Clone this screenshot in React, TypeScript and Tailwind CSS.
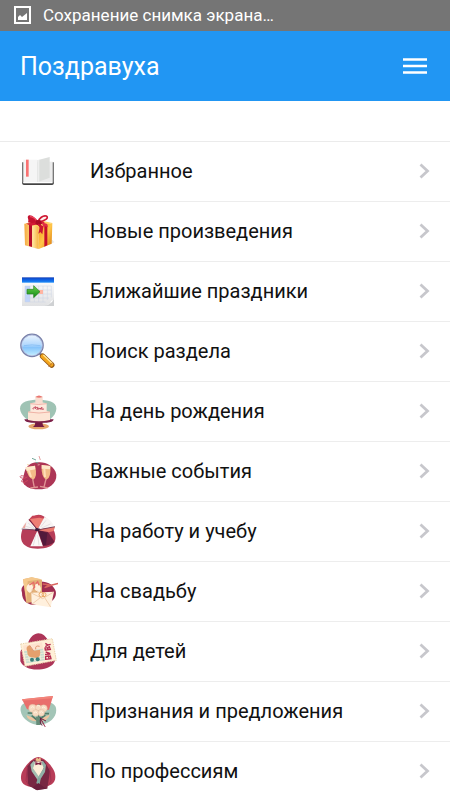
import React from 'react';

const Icon: React.FC<{ children: React.ReactNode }> = ({ children }) => (
    <svg className="w-10 h-10 shrink-0" viewBox="24 21 120 120" aria-hidden="true">
        {children}
    </svg>
);

const BookIcon = () => (
    <Icon>
        <path d="M36 52h96v62q0 6-6 6H42q-6 0-6-6z" fill="#777" />
        <path d="M38 112h92v3q0 4-4 4H42q-4 0-4-4z" fill="#333" />
        <path d="M40 44h42v70H40z" fill="#f5f5f5" />
        <path d="M82 50h46v61H82z" fill="#ececec" />
        <path d="M82 46l37-10v62l-37 14z" fill="#dcdedc" />
        <path d="M82 46l6-2v66l-6 2z" fill="#eee" />
        <path d="M40 111h88v4H40z" fill="#fff" />
        <path d="M48 44h8v51h-8z" fill="#f97272" />
    </Icon>
);

const GiftIcon = () => (
    <Icon>
        <defs>
            <linearGradient id="giftLeft" x1="0" x2="1">
                <stop offset="0" stopColor="#f5a83c" />
                <stop offset=".6" stopColor="#ffe49b" />
                <stop offset="1" stopColor="#f6b23f" />
            </linearGradient>
            <linearGradient id="giftRight" x1="0" x2="1" y1="0" y2="1">
                <stop offset="0" stopColor="#f19a1d" />
                <stop offset=".5" stopColor="#ffc649" />
                <stop offset="1" stopColor="#d87407" />
            </linearGradient>
        </defs>
        <path d="M45 120l38 12 50-20-5-7z" fill="#ddd" opacity=".7" />
        <path d="M43 56l43 8v68l-41-11z" fill="url(#giftLeft)" />
        <path d="M86 64l41-10-2 62-39 16z" fill="url(#giftRight)" />
        <path d="M43 56l43-11 41 9-41 11z" fill="#ffcf62" />
        <path d="M57 58l9 2v66l-9-3z" fill="#b80f2a" />
        <path d="M103 60l9-3v64l-9 4z" fill="#c50f2c" />
        <path d="M48 56l45-9 12 6-42 9z" fill="#d31a36" />
        <path d="M84 50c-8-12-20-23-29-18-5 5 3 10-1 20 8 4 20 2 30-2z" fill="#c4122f" />
        <path d="M60 35c8 0 16 6 21 13" stroke="#ef4a60" strokeWidth="4" fill="none" />
        <path d="M85 50c2-10 14-20 24-17 9 5-4 16-24 17z" fill="#fff2ee" stroke="#cf1733" strokeWidth="5" />
        <path d="M79 45l12 1 6 9-9 8-12-6z" fill="#a80b25" />
        <path d="M86 56l14 8-3 24-6-7-6 5 4-18-6-10z" fill="#cc1631" />
        <path d="M94 52l16 4 4 10-8-2-3 6z" fill="#e02d46" />
    </Icon>
);

const CalendarIcon = () => (
    <Icon>
        <defs>
            <linearGradient id="calTop" x1="0" x2="0" y1="0" y2="1">
                <stop offset="0" stopColor="#1442b8" />
                <stop offset=".35" stopColor="#0d58dd" />
                <stop offset="1" stopColor="#1c8cf8" />
            </linearGradient>
            <linearGradient id="calPage" x1="0" x2="0" y1="0" y2="1">
                <stop offset="0" stopColor="#fff" />
                <stop offset="1" stopColor="#e0e1e3" />
            </linearGradient>
            <linearGradient id="calArrow" x1="0" x2="0" y1="0" y2="1">
                <stop offset="0" stopColor="#6cd34b" />
                <stop offset="1" stopColor="#118a14" />
            </linearGradient>
        </defs>
        <path d="M36 38h96v85H36z" fill="url(#calPage)" />
        <path d="M45 63h15v48H45z" fill="#bfd4fb" />
        <path d="M45 63h79M45 75h79M45 87h79M45 99h72M45 111h62M45 63v48M60 63v48M73 63v48M86 63v48M99 63v48M112 63v42M124 63v34" stroke="#cbd3e2" strokeWidth="1.5" fill="none" />
        <path d="M87 75h12v12H87z" fill="#ffb5a2" />
        <path d="M36 37h96v16H36z" fill="url(#calTop)" />
        <path d="M132 100v23h-30q20-2 18-13 9 0 12-10z" fill="#cfd1d3" />
        <path d="M104 119q20-2 18-11 6 0 9-7-3 17-27 18z" fill="#fff" />
        <path d="M51 73h20V62l19 18-19 18V87H51z" fill="url(#calArrow)" stroke="#287f21" strokeWidth="2" />
    </Icon>
);

const SearchIcon = () => (
    <Icon>
        <defs>
            <linearGradient id="lens" x1="0" x2="0" y1="0" y2="1">
                <stop offset="0" stopColor="#eef6ff" />
                <stop offset=".48" stopColor="#b2d8fd" />
                <stop offset=".6" stopColor="#86c4fb" />
                <stop offset="1" stopColor="#c7f1ff" />
            </linearGradient>
        </defs>
        <path d="M89 85l10 9" stroke="#777c95" strokeWidth="7" />
        <path d="M98 94l27 26" stroke="#955a18" strokeWidth="17" strokeLinecap="round" />
        <path d="M98 94l26 25" stroke="#f4a51c" strokeWidth="12" strokeLinecap="round" />
        <path d="M101 91l25 24" stroke="#ffe695" strokeWidth="4" strokeLinecap="round" />
        <path d="M116 125l12-12" stroke="#b56a28" strokeWidth="3" />
        <circle cx="66" cy="61" r="33" fill="url(#lens)" stroke="#7880a9" strokeWidth="5" />
        <circle cx="66" cy="61" r="31" fill="none" stroke="#cad7f2" strokeWidth="2" />
        <path d="M42 62q24-5 49 0" stroke="#7db8f2" strokeWidth="2" fill="none" />
    </Icon>
);

const CakeIcon = () => (
    <Icon>
        <path d="M30 71c0-22 26-27 54-27s56 5 55 27c-1 22-26 44-54 44S31 91 30 71z" fill="#9fc3b4" />
        <ellipse cx="86" cy="124" rx="31" ry="9" fill="#e5a66e" />
        <path d="M76 110h22q-2 10 6 16H69q8-6 7-16z" fill="#761b43" />
        <path d="M43 103h88q-2 10-21 10H64q-19 0-21-10z" fill="#7d2148" />
        <path d="M54 80q33-8 66 0v25q-33 8-66 0z" fill="#fde5d5" />
        <path d="M61 55q25-6 49 0v24q-25 6-49 0z" fill="#fde8dc" />
        <path d="M76 35q11-4 22 0v19q-11 4-22 0z" fill="#f8ddd0" />
        <path d="M76 36q11-9 22 0-11 5-22 0z" fill="#e97671" />
        <path d="M54 81q33 6 66 0M61 56q24 5 49 0" stroke="#e9998e" strokeWidth="2" fill="none" />
        <path d="M70 73q-4-3 2-5 9-7 3 3 5-5 8-4l-2 7q7-9 5-1 6-8 5 0 7-13 4 0l7-1" stroke="#b92f48" strokeWidth="2.5" fill="none" />
    </Icon>
);

const ChampagneIcon = () => (
    <Icon>
        <path d="M43 83c5-23 25-34 43-31 19-2 50 12 53 37 2 27-23 44-54 44-26 0-46-10-47-28z" fill="#ad3656" />
        <path d="M46 94q-20-5-14 4 12 7 20-2-18 5-17 14 8 6 19-4-18 7-9 14" stroke="#c8435c" strokeWidth="2.5" fill="none" />
        <path d="M47 67l28-5q8 32-5 42-16-3-23-37z" fill="#f3bd88" />
        <path d="M47 67l28-5 1 11-26 5z" fill="#ffe9cd" />
        <path d="M95 60l26 3q3 36-12 41-16-7-14-44z" fill="#f3bd88" />
        <path d="M95 60l26 3-1 10-25-2z" fill="#ffe8ca" />
        <path d="M56 74l7 22M103 71l2 25" stroke="#ffdfb8" strokeWidth="6" />
        <path d="M68 102l5 26M108 102l-6 24M61 129l23-3M90 124l23 5" stroke="#e09494" strokeWidth="4" />
        <path d="M66 40l12 5M77 52l8 2" stroke="#75a99b" strokeWidth="3" />
        <path d="M87 33l4 12M83 60l6-1" stroke="#e5a1a1" strokeWidth="3" />
        <circle cx="54" cy="59" r="2" fill="#efc286" />
    </Icon>
);

const UmbrellaIcon = () => (
    <Icon>
        <path d="M38 72c8-17 29-43 47-43 21 0 35 20 45 43 14 31 8 59-47 59-49 0-57-29-45-59z" fill="#b63d58" />
        <path d="M35 73q6-20 20-29l28 30z" fill="#f7f4f4" />
        <path d="M37 68l12-16-4 18z" fill="#eca79f" />
        <path d="M82 74L56 44l11-12 24-1 12 8z" fill="#c64355" />
        <path d="M82 72L60 42l28-4 14 3z" fill="#ee7f75" />
        <path d="M82 74l22-39q22 10 29 31z" fill="#f8f5f4" />
        <path d="M82 74l53-9-4 13-35 9z" fill="#ec7b6f" />
        <path d="M82 77l17 47H61z" fill="#fbf8f7" />
        <path d="M84 76l15 47q18 0 35-12l-20-30z" fill="#6f2141" />
        <path d="M84 76l16 45 8-2 4-35z" fill="#531a3b" />
        <path d="M82 74L57 43M82 75l-47-3M82 75l53-10" stroke="#4a1f40" strokeWidth="2" />
        <path d="M77 68l13 3-5 8-10-2z" fill="#3d193b" />
        <path d="M45 63l29 9M54 54l20 16M92 66l16-20M95 69l26-12M78 88l-8 33M83 90l4 31" stroke="#dad5d8" strokeWidth="2" />
    </Icon>
);

const WeddingIcon = () => (
    <Icon>
        <path d="M36 83c-8-22 16-34 45-33 29-4 49 8 56 28 6 27-22 43-57 42-24 2-45-11-44-37z" fill="#9f2d51" />
        <path d="M39 43l26-6 31 7v64l-47 6z" fill="#e3b178" />
        <path d="M39 43l26-6 30 6-42 6-3 60z" fill="#f5c88c" />
        <path d="M51 62q14-16 19 8-2 12-12 13-12-8-7-21zM73 70q3-18 11-14 14 13 6 25-14 0-17-11z" fill="#fff0dd" />
        <path d="M58 60l13-8 3 14-5 6M77 56l6-6 4 11" stroke="#e66c6a" strokeWidth="4" fill="none" />
        <path d="M67 72q-4 16 11 23M81 77q-3 12-14 16" stroke="#d89b6f" strokeWidth="2" fill="none" />
        <path d="M98 57l18 2-12 9 22-8 20-5" stroke="#d9655f" strokeWidth="4" fill="none" />
        <path d="M64 83l68-3-10 47-57-9z" fill="#fff0dd" />
        <path d="M64 84l34 17 33-20M65 118l26-20M122 126l-18-28" stroke="#e7bd95" strokeWidth="2" fill="none" />
        <circle cx="94" cy="89" r="7" fill="none" stroke="#eba969" strokeWidth="3" />
        <circle cx="102" cy="89" r="6" fill="none" stroke="#eba969" strokeWidth="3" />
    </Icon>
);

const BabyIcon = () => (
    <Icon>
        <path d="M31 86c-2-14 14-19 22-30 15-40 47-42 65-3 20 29 31 63-7 76-31 10-69 5-80-20z" fill="#ad3558" />
        <path d="M32 57l95-16 12 65-94 18z" fill="#fff0d8" stroke="#ead4ae" strokeWidth="3" strokeDasharray="4 3" />
        <path d="M39 62l57-10 9 54-56 9z" fill="#fde3cf" />
        <path d="M42 79l57-8 6 35-56 9z" fill="#c8ded0" />
        <path d="M42 86l60-9M44 93l60-9M46 101l59-9M48 108l57-8M54 79l5 32M65 77l5 31M76 76l5 31M87 74l5 30" stroke="#fff2dc" strokeWidth="2" />
        <path d="M52 80q-7-15 6-19l12 16 20-3q4 22-11 25l-16-2q-12-4-11-17z" fill="#e5a06d" />
        <path d="M59 61l12 17M77 73q-2-13 12-9" stroke="#dd9670" strokeWidth="3" fill="none" />
        <circle cx="66" cy="104" r="6" fill="#387e78" />
        <circle cx="83" cy="103" r="6" fill="#387e78" />
        <g fill="none" stroke="#b52b51" strokeWidth="4">
            <path d="M107 103l16-2-2-8-5 1 1 6-2-7-8 1zM121 87l-16 1M121 86l-14-5M113 87v-6M106 75l15-2-3-8-4 2v6l-2-5-7 1zM106 55l8 5 8-2M114 60l-8 5" />
        </g>
    </Icon>
);

const BouquetIcon = () => (
    <Icon>
        <path d="M32 78c-3-18 10-26 25-27 25-6 67-6 80 14 8 26-13 52-48 55-26 0-53-17-57-42z" fill="#a3c5b7" />
        <path d="M49 90q34 20 71-2-4 22-38 21-29 0-33-19z" fill="#edc4a0" />
        <path d="M36 43l93-10-12 41-66-1z" fill="#e96f6c" />
        <path d="M36 43l93-10-2 7-89 7z" fill="#f2847a" />
        <path d="M53 84l64 2M65 92l16 13M106 90l-20 15M86 58v61" stroke="#547d69" strokeWidth="5" />
        <path d="M78 95h16l-3 25H79z" fill="#668c78" />
        <g fill="#f7dcc3" stroke="#dca78b" strokeWidth="1">
            <circle cx="68" cy="70" r="12" />
            <circle cx="101" cy="70" r="11" />
            <circle cx="85" cy="68" r="9" />
            <circle cx="77" cy="84" r="10" />
            <circle cx="94" cy="83" r="10" />
        </g>
        <path d="M62 69q5-8 11-1M95 69q6-7 12 1M72 84q6-7 10 1M89 83q6-7 10 1M81 63q5-4 9 1" stroke="#fff2df" strokeWidth="3" fill="none" />
        <path d="M90 97l15 28M92 99q-4 19 5 22M94 101l14 7" stroke="#671e42" strokeWidth="3" fill="none" />
        <path d="M93 108l13 17" stroke="#d85667" strokeWidth="2" />
    </Icon>
);

const SuitIcon = () => (
    <Icon>
        <path d="M34 88c4-18 32-51 50-52 20 0 48 32 51 50 5 26-8 39-49 41-40 0-58-10-52-39z" fill="#b83d58" />
        <path d="M65 48L51 65l3 56 24 13 34-3 8-53-18-32-17-5z" fill="#782743" />
        <path d="M52 66l-4 41 9 15M119 68l4 40-9 14" stroke="#a13350" strokeWidth="3" fill="none" />
        <path d="M72 50l26-1 5 16-17 33-18-27z" fill="#fdeed8" />
        <path d="M71 47l-10 12 4 20 22 32 2-13-20-28 6-17z" fill="#a3bdb0" />
        <path d="M99 48l9 12-3 21-17 27-4-11 17-28-7-17z" fill="#91b0a6" />
        <path d="M84 97l8 4-4 22-9-9z" fill="#83a69d" />
        <path d="M68 128l17-14 24 17-28 5z" fill="#6a1f3d" />
        <path d="M76 51l9 3 9-3v10l-9-3-9 3z" fill="#7d2042" />
        <path d="M76 46l5-9 4 5 6-5 2 10-9 3z" fill="#ebc08a" />
    </Icon>
);

const sections = [
    { title: 'Избранное', icon: BookIcon },
    { title: 'Новые произведения', icon: GiftIcon },
    { title: 'Ближайшие праздники', icon: CalendarIcon },
    { title: 'Поиск раздела', icon: SearchIcon },
    { title: 'На день рождения', icon: CakeIcon },
    { title: 'Важные события', icon: ChampagneIcon },
    { title: 'На работу и учебу', icon: UmbrellaIcon },
    { title: 'На свадьбу', icon: WeddingIcon },
    { title: 'Для детей', icon: BabyIcon },
    { title: 'Признания и предложения', icon: BouquetIcon },
    { title: 'По профессиям', icon: SuitIcon },
];

const App: React.FC = () => {
    return (
        <div className="flex flex-col h-screen bg-white text-[#111] font-['Roboto',sans-serif]">
            <div className="flex items-center gap-3 h-[31px] shrink-0 px-3.5 pb-0.5 bg-[#757575] text-white">
                <svg className="w-[17px] h-[18px]" viewBox="0 0 17 18" aria-hidden="true">
                    <path d="M1 1h15v16H1z" fill="none" stroke="currentColor" strokeWidth="2" />
                    <path d="M4 14v-3l2-2 2 2 5-4v7z" fill="currentColor" />
                </svg>
                <span className="text-[17px] leading-6">Сохранение снимка экрана…</span>
            </div>

            <header className="flex items-center justify-between h-[70px] shrink-0 px-5 bg-[#2196f3] text-white">
                <h1 className="pt-0.5 text-[25px] leading-8">Поздравуха</h1>
                <button type="button" aria-label="Меню" className="flex items-center justify-center w-[30px] h-10">
                    <svg className="w-6 h-4" viewBox="0 0 24 16" aria-hidden="true">
                        <path d="M0 1.5h24M0 8h24M0 14.5h24" stroke="currentColor" strokeWidth="2.6" />
                    </svg>
                </button>
            </header>

            <main className="flex-1 min-h-0 overflow-y-auto [scrollbar-width:none]">
                <div className="h-[41px] border-b border-[#ebebeb]" />
                <ul>
                    {sections.map(({ title, icon: SectionIcon }) => (
                        <li key={title}>
                            <a href="#" className="flex items-center h-15 pl-[18px]">
                                <SectionIcon />
                                <span className="flex flex-1 items-center justify-between h-15 ml-8 pr-5 pb-0.5 border-b border-[#ededed]">
                                    <span className="text-[20px] leading-7">{title}</span>
                                    <svg className="w-[11px] h-4" viewBox="0 0 11 16" aria-hidden="true">
                                        <path d="M1.5 1.5L8.5 8l-7 6.5" fill="none" stroke="#c7c7cc" strokeWidth="2.8" />
                                    </svg>
                                </span>
                            </a>
                        </li>
                    ))}
                </ul>
            </main>
        </div>
    );
};

export default App;
